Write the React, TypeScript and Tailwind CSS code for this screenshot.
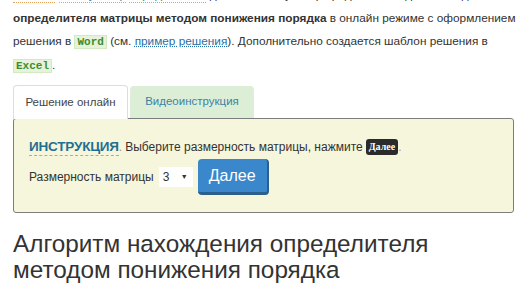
export default function App() {
  return (
    <div className="w-[516px] h-[290px] overflow-hidden bg-white" style={{ fontFamily: '"Liberation Sans", Arial, sans-serif' }}>
      <div className="px-[13px] -mt-[16px] text-[11.8px] leading-[23px] text-[#333]">
        <p className="whitespace-nowrap">
          <span className="text-[#c0392b] border-b border-dotted border-[#e6a15a]">Онлайн</span>{" "}
          <span className="text-[#2a7ab0] border-b border-dotted border-[#e6a15a]">калькулятор</span>{" "}
          <span className="text-[#3c8d2f] border-b border-dotted border-[#e6a15a]">определителя</span>{" "}
          данный калькулятор предназначен для нахождения
          <br />
          <b>определителя матрицы методом понижения порядка</b> в онлайн режиме с оформлением
          <br />
          решения в{" "}
          <code className="px-[2px] bg-[#e6f2d9] text-[#3c8d2f] font-bold text-[11px] border border-[#d4e8c2]" style={{ fontFamily: '"Liberation Mono", monospace' }}>
            Word
          </code>{" "}
          (см.{" "}
          <span className="text-[#2a6ea6] underline decoration-dotted">пример решения</span>). Дополнительно создается шаблон решения в
          <br />
          <code className="px-[2px] bg-[#e6f2d9] text-[#3c8d2f] font-bold text-[11px] border border-[#d4e8c2]" style={{ fontFamily: '"Liberation Mono", monospace' }}>
            Excel
          </code>
          .
        </p>
      </div>

      <div className="px-[13px] mt-[6px]">
        <div className="flex items-end gap-[2px]">
          <div className="w-[115px] h-[34px] flex items-center justify-center bg-white border border-b-0 border-[#ddd] rounded-t-[4px] text-[11.5px] text-[#444] relative top-[1px]">
            Решение онлайн
          </div>
          <div className="w-[124px] h-[32px] flex items-center justify-center bg-[#dcefd6] rounded-t-[4px] text-[11.5px] text-[#3f7fa6]">
            Видеоинструкция
          </div>
        </div>
        <div className="w-[501px] h-[95px] bg-[#f6f6dc] border border-[#7d7d7d] rounded-[3px] px-[15px] pt-[17px]">
          <div className="flex items-center text-[12px] text-[#333] leading-[22px]">
            <span className="font-bold text-[13.5px] text-[#1f6f95] border-b border-dashed border-[#e0a050] leading-[17px] tracking-[-0.2px]">ИНСТРУКЦИЯ</span>
            <span className="text-[#999]">.</span>
            <span className="ml-[3px]">Выберите размерность матрицы, нажмите</span>
            <span className="ml-[3px] bg-[#2b2b2b] text-white text-[10px] font-bold px-[3px] rounded-[3px] leading-[16px]" style={{ fontFamily: '"Liberation Serif", serif' }}>
              Далее
            </span>
            <span className="text-[#999]">.</span>
          </div>
          <div className="flex items-center mt-[1px] text-[12px] text-[#333]">
            <span>Размерность матрицы</span>
            <div className="ml-[5px] w-[34px] h-[20px] bg-white flex items-center justify-between pl-[4px] pr-[5px] text-[12px]">
              <span>3</span>
              <span className="text-[7px] text-[#333]">▼</span>
            </div>
            <button className="ml-[5px] w-[71px] h-[36px] bg-[#3a87cb] text-white text-[16px] rounded-[4px] border-b-[3px] border-r-[2px] border-[#2a5f8e]">
              Далее
            </button>
          </div>
        </div>
      </div>

      <h2 className="px-[13px] mt-[18px] text-[24.3px] leading-[26px] text-[#333]">
        Алгоритм нахождения определителя
        <br />
        методом понижения порядка
      </h2>
    </div>
  );
}
